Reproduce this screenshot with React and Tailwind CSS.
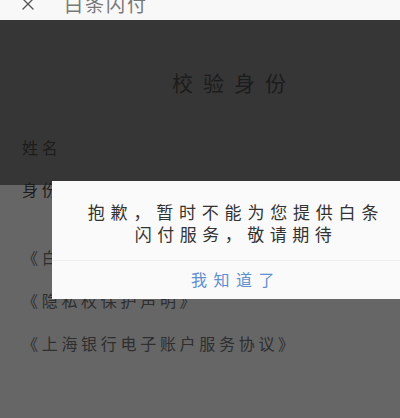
import { X } from "lucide-react";

const cjk = { fontFamily: '"Noto Sans CJK SC", "Noto Sans", sans-serif' };

const links = ["《白条闪付用户服务协议》", "《隐私权保护声明》", "《上海银行电子账户服务协议》"];

export default function App() {
  return (
    <div className="relative h-[418px] w-[400px] overflow-hidden bg-[#666666]" style={cjk}>
      {/* top bar, scrolled partly out of view */}
      <header className="h-[26px] bg-[#f8f8f8]">
        <div className="-mt-[6px] flex items-center pl-[18px]">
          <X className="h-[20px] w-[20px] text-[#555]" strokeWidth={1.6} />
          <span className="ml-[26px] text-[19px] leading-[20px] tracking-[2px] text-[#777]">白条闪付</span>
        </div>
      </header>

      {/* form, dimmed */}
      <section className="h-[165px] bg-[#363636] pl-[22px] text-[#1c1c1c]">
        <h1 className="pl-[150px] pt-[52px] text-[21px] leading-[21px] tracking-[10px]">校验身份</h1>
        <div className="mt-[46px] text-[16px] leading-[16px] tracking-[3.7px]">姓名</div>
        <div className="mt-[26px] text-[16px] leading-[16px] tracking-[3.7px]">身份证号</div>
      </section>

      <div className="flex flex-col gap-[27px] pl-[22px] pt-[64px] text-[16px] leading-[16px] tracking-[3.7px] text-[#2e2e2e]">
        {links.map((l) => (
          <div key={l}>{l}</div>
        ))}
      </div>

      {/* dialog */}
      <div className="absolute left-[52px] top-[181px] h-[118px] w-[362px] bg-[#fafafa]">
        <div className="flex flex-col items-center pt-[20px] text-[17px] leading-[22px] text-[#333]">
          <p className="pl-[6px] tracking-[5.8px]">抱歉，暂时不能为您提供白条</p>
          <p className="pl-[6px] tracking-[5.5px]">闪付服务，敬请期待</p>
        </div>
        <div className="mt-[15px] border-t border-[#eeeeee] pt-[10px] text-center text-[16px] leading-[16px] tracking-[6.5px] text-[#6090cf]">
          <span className="pl-[6px]">我知道了</span>
        </div>
      </div>
    </div>
  );
}
